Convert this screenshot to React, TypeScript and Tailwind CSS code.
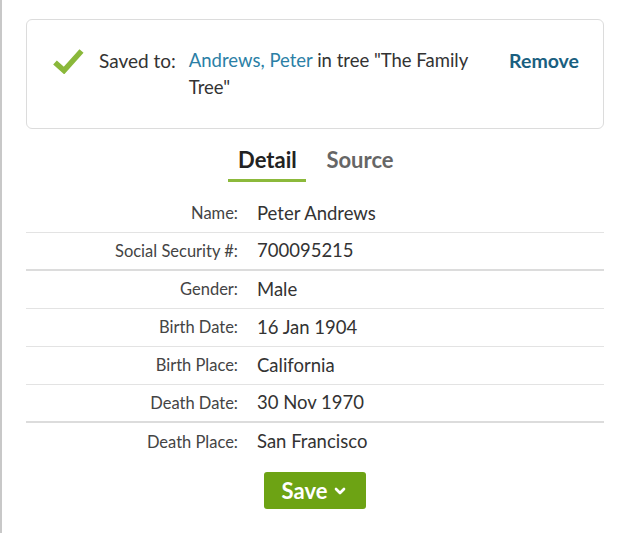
import { ChevronDown } from 'lucide-react';

const rows: Array<{ label: string; value: string; thick?: boolean; last?: boolean }> = [
  { label: 'Name:', value: 'Peter Andrews' },
  { label: 'Social Security #:', value: '700095215', thick: true },
  { label: 'Gender:', value: 'Male' },
  { label: 'Birth Date:', value: '16 Jan 1904' },
  { label: 'Birth Place:', value: 'California' },
  { label: 'Death Date:', value: '30 Nov 1970', thick: true },
  { label: 'Death Place:', value: 'San Francisco', last: true },
];

export default function App() {
  return (
    <div className="w-[626px] h-[533px] bg-white overflow-hidden" style={{ fontFamily: 'Lato, "Noto Sans", sans-serif' }}>
      <div className="h-full border-l-2 border-[#c8c8c8] pl-[24px] pr-[20px] pt-[19px]">
        {/* Saved banner */}
        <div className="w-[578px] h-[110px] rounded-md border border-[#dcdcdc] flex items-start pt-[27px] pl-[26px] pr-[24px]">
          <svg className="w-[31px] h-[26px] mt-[1px] shrink-0" viewBox="0 0 31 26">
            <path d="M2 14.5 L11 22.5 L28.5 3" fill="none" stroke="#8ab83a" strokeWidth="5.5" strokeLinecap="butt" strokeLinejoin="miter" />
          </svg>
          <div className="ml-[15px] text-[19px] leading-[28px] text-[#333] whitespace-nowrap">Saved to:</div>
          <p className="ml-[13px] w-[296px] text-[18.5px] leading-[27px] text-[#333]">
            <span className="text-[#2b7fa6]">Andrews, Peter</span> in tree "The Family Tree"
          </p>
          <div className="ml-auto text-[19.5px] leading-[28px] font-bold text-[#1a5f80]">Remove</div>
        </div>

        {/* Tabs */}
        <div className="flex justify-center mt-[15px] w-[578px]">
          <div className="flex gap-[20px] -ml-[8px]">
            <div className="w-[78px] flex flex-col items-center">
              <span className="text-[22px] leading-[32px] font-bold text-[#222]">Detail</span>
              <div className="h-[3px] w-full bg-[#8cb93b] mt-[3px]" />
            </div>
            <span className="text-[22px] leading-[32px] font-bold text-[#666]">Source</span>
          </div>
        </div>

        {/* Detail rows */}
        <div className="w-[578px] mt-[13px]">
          {rows.map((r) => (
            <div
              key={r.label}
              className={`flex items-center h-[38px] ${r.last ? '' : r.thick ? 'border-b-2 border-[#dcdcdc]' : 'border-b border-[#e3e3e3]'}`}
            >
              <div className="w-[212px] text-right text-[16.5px] text-[#444]">{r.label}</div>
              <div className="ml-[19px] text-[18.5px] text-[#333]">{r.value}</div>
            </div>
          ))}
        </div>

        {/* Save button */}
        <div className="flex justify-center w-[578px] mt-[11px]">
          <button className="w-[102px] h-[37px] rounded-[3px] bg-[#6da314] text-white text-[22px] font-bold flex items-center justify-center gap-[5px]">
            Save
            <ChevronDown size={16} strokeWidth={4} className="mt-[1px]" />
          </button>
        </div>
      </div>
    </div>
  );
}
